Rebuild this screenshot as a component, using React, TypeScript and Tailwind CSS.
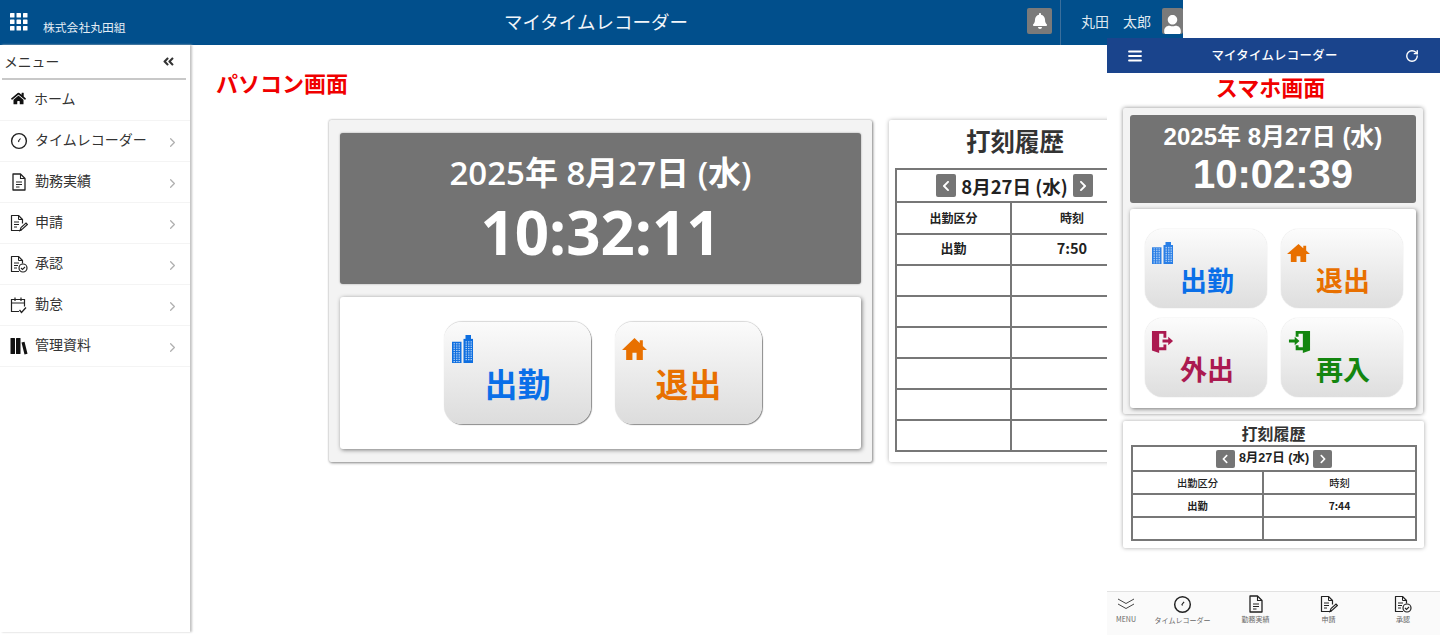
import React from "react";
import { FaBell, FaUser, FaHome, FaChevronLeft, FaChevronRight, FaAngleDoubleLeft } from "react-icons/fa";
import { LuChevronRight, LuRotateCw, LuMenu } from "react-icons/lu";

const jp = "font-['Noto_Sans_CJK_JP','Noto_Sans',sans-serif]";

function Grid() {
  return (
    <svg width="18" height="18" viewBox="0 0 18 18" fill="#fff">
      {[0, 6.5, 13].map((y) => [0, 6.5, 13].map((x) => <rect key={`${x}-${y}`} x={x} y={y} width="4.5" height="4.5" rx="0.6" />))}
    </svg>
  );
}

function IconClock({ s = 18 }: { s?: number }) {
  return (
    <svg width={s} height={s} viewBox="0 0 18 18" fill="none" stroke="#222" strokeWidth="1.4">
      <circle cx="9" cy="9" r="7.4" />
      <path d="M10.5 6.5 L8.5 9 L9 10" strokeWidth="1.1" />
    </svg>
  );
}
function IconDoc({ s = 18 }: { s?: number }) {
  return (
    <svg width={s} height={s} viewBox="0 0 18 18" fill="none" stroke="#222" strokeWidth="1.3">
      <path d="M3 1h7.5l4.5 4.5V17H3z" strokeLinejoin="round" />
      <path d="M10.5 1v4.5H15M6 9h6M6 11.5h6M6 14h3.5" strokeWidth="1.1" />
    </svg>
  );
}
function IconDocPen({ s = 18 }: { s?: number }) {
  return (
    <svg width={s} height={s} viewBox="0 0 18 18" fill="none" stroke="#222" strokeWidth="1.2">
      <path d="M11.5 16.5H1.5v-15h7l4 4v4" strokeLinejoin="round" />
      <path d="M8.5 1.5v4h4M4 8h5M4 10.5h5M4 13h3" strokeWidth="1" />
      <path d="M10 16.5l1-3 5-4.5 1.4 1.5-5 4.5z" strokeWidth="1.1" />
    </svg>
  );
}
function IconDocCheck({ s = 18 }: { s?: number }) {
  return (
    <svg width={s} height={s} viewBox="0 0 18 18" fill="none" stroke="#222" strokeWidth="1.2">
      <path d="M9 16.5H1.5v-15h7l4 4v3" strokeLinejoin="round" />
      <path d="M8.5 1.5v4h4M4 8h5M4 10.5h4M4 13h3" strokeWidth="1" />
      <circle cx="13" cy="13" r="4" />
      <path d="M11 13l1.5 1.5 2.5-2.5" strokeWidth="1.1" />
    </svg>
  );
}
function IconCal() {
  return (
    <svg width="18" height="18" viewBox="0 0 18 18" fill="none" stroke="#222" strokeWidth="1.2">
      <path d="M9 15.5H1.5v-12h13v7M1.5 7h13M5 1.5v3.5M11 1.5v3.5" />
      <path d="M9.5 14l2 2.5 4.5-5" strokeWidth="1.3" />
    </svg>
  );
}
function IconBooks() {
  return (
    <svg width="18" height="18" viewBox="0 0 18 18" fill="#111">
      <rect x="0.5" y="1" width="4.5" height="16" rx="0.5" />
      <rect x="6" y="1" width="4.5" height="16" rx="0.5" />
      <path d="M11.5 5.5l3-.8 3 12-3 .8z" />
    </svg>
  );
}
function IconBuilding({ w, h, c }: { w: number; h: number; c: string }) {
  const cells = [];
  for (let y = 0; y < 9; y++) for (let x = 0; x < 3; x++) {
    cells.push(<rect key={`a${x}${y}`} x={1.5 + x * 2.5} y={8.5 + y * 2.3} width="1.5" height="1.2" fill="#fff" opacity="0.65" />);
    cells.push(<rect key={`b${x}${y}`} x={13.5 + x * 2.5} y={6.5 + y * 2.3} width="1.5" height="1.2" fill="#fff" opacity="0.65" />);
  }
  return (
    <svg width={w} height={h} viewBox="0 0 21 29" preserveAspectRatio="none" className="block">
      <rect x="0" y="7" width="9.5" height="22" fill={c} />
      <rect x="11.5" y="4" width="9.5" height="25" fill={c} />
      <rect x="13.5" y="0" width="5.5" height="5" fill={c} />
      {cells}
    </svg>
  );
}
function IconHouse({ w, h, c }: { w: number; h: number; c: string }) {
  return (
    <svg width={w} height={h} viewBox="0 0 24 20" preserveAspectRatio="none" fill={c} className="block">
      <path d="M12 0 L0 11 H4 V20 H10 V13.5 H14 V20 H20 V11 H24 L20 7.3 V2 H17 V4.6 Z" />
    </svg>
  );
}
function IconDoorOut({ c }: { c: string }) {
  return (
    <svg width="23" height="23" viewBox="0 0 24 24" fill={c} className="block">
      <path d="M1 1h15v7h-3V4H8.5v14H13v-3h3v6H8.5v3L1 21.5z" />
      <path d="M12 10h6V7l5 4.5-5 4.5v-3h-6z" />
    </svg>
  );
}
function IconDoorIn({ c }: { c: string }) {
  return (
    <svg width="23" height="23" viewBox="0 0 24 24" fill={c} className="block">
      <path d="M8 1h15v20.5L15.5 24v-3H8v-5h3v2h4.5V4H11v3H8z" />
      <path d="M1 10h6V7l5 4.5-5 4.5v-3H1z" />
    </svg>
  );
}

const menu = [
  { label: "タイムレコーダー", icon: <IconClock /> },
  { label: "勤務実績", icon: <IconDoc /> },
  { label: "申請", icon: <IconDocPen /> },
  { label: "承認", icon: <IconDocCheck /> },
  { label: "勤怠", icon: <IconCal /> },
  { label: "管理資料", icon: <IconBooks /> },
];

function PunchPc({ label, color, icon, iconClass }: { label: string; color: string; icon: React.ReactNode; iconClass: string }) {
  return (
    <div className="relative flex h-[102px] w-[147px] items-end justify-center rounded-[18px] bg-gradient-to-b from-[#fbfbfb] to-[#dcdcdc] pb-[21px] shadow-[1px_1px_1px_#8a8a8a,0_-1px_1px_#d8d8d8]">
      <span className={iconClass}>{icon}</span>
      <span className="text-[33px] font-bold leading-[40px]" style={{ color }}>{label}</span>
    </div>
  );
}

function PunchSp({ label, color, icon, iconClass }: { label: string; color: string; icon: React.ReactNode; iconClass: string }) {
  return (
    <div className="relative flex h-[79px] w-[122px] items-end justify-center rounded-[18px] bg-gradient-to-b from-[#fcfcfc] to-[#dedede] pb-[12px] pl-[2px] shadow-[0_0_1px_#bbbbbb]">
      <span className={iconClass}>{icon}</span>
      <span className="text-[27px] font-semibold leading-[32px]" style={{ color }}>{label}</span>
    </div>
  );
}

export default function App() {
  return (
    <div className={`relative h-[635px] w-[1440px] overflow-hidden bg-white ${jp}`}>
      <div className="flex h-[635px] w-[1183px] flex-col">
        <header className="flex h-[45px] shrink-0 items-stretch bg-[#014f8c] text-white">
          <div className="flex w-[360px] items-start pl-[10px] pt-[13px]">
            <Grid />
            <span className="ml-[15px] mt-[5px] text-[11.8px] leading-[18px] text-[#e4edf5]">株式会社丸田組</span>
          </div>
          <div className="flex flex-1 items-center justify-center pr-[195px] pb-[2px] text-[18.5px] text-[#f2f6fa]">マイタイムレコーダー</div>
          <div className="flex items-center pr-[8px] pb-[3px]">
            <div className="flex h-[26px] w-[25px] items-center justify-center rounded-[2px] bg-[#7a7a7a]"><FaBell size={16} color="#fff" /></div>
          </div>
          <div className="flex w-[123px] items-center border-l border-[#3b6f9c] pl-[20px] pb-[3px]">
            <span className="w-[81px] whitespace-nowrap text-[14px] text-[#dfe8f0]">丸田　太郎</span>
            <div className="flex h-[26px] w-[21px] items-end justify-center overflow-hidden rounded-[2px] bg-[#7a7a7a]"><FaUser size={19} color="#fff" /></div>
          </div>
        </header>
        <div className="flex min-h-0 flex-1">
          <aside className="h-[587px] w-[190px] shrink-0 text-[#333] shadow-[2px_0_2px_#c4c4c4]">
            <div className="mx-[2px] flex h-[35px] w-[184px] items-center justify-between border-b-2 border-[#c8c8c8] pr-[11px] pl-[2px] text-[13.8px]">
              <span>メニュー</span>
              <FaAngleDoubleLeft size={13} color="#333" />
            </div>
            <div className="flex h-[41px] items-center gap-[8px] border-b border-[#f4f4f4] pl-[11px] pb-[3px] text-[14px]">
              <FaHome size={15} color="#111" />
              <span>ホーム</span>
            </div>
            {menu.map((m) => (
              <div key={m.label} className="flex h-[41px] items-center border-b border-[#f4f4f4] pl-[10px] pr-[10px] text-[14px]">
                <span className="flex w-[25px] items-center">{m.icon}</span>
                <span className="flex-1 pb-[3px]">{m.label}</span>
                <LuChevronRight size={15} color="#b0b0b0" className="mt-[2px]" />
              </div>
            ))}
          </aside>
          <main className="min-w-0 flex-1 overflow-hidden pl-[26px]">
            <div className="pt-[22px] text-[22px] font-bold leading-[30px] text-[#f00000]">パソコン画面</div>
            <div className="ml-[113px] mt-[23px] flex w-[1000px] gap-[17px]">
              <section className="flex h-[342px] w-[543px] shrink-0 flex-col gap-[13px] rounded-[2px] bg-[#f3f3f3] px-[11px] pt-[13px] shadow-[1px_1px_3px_#8c8c8c,0_0_2px_#aaaaaa]">
                <div className="flex h-[151px] flex-col items-center rounded-[3px] bg-[#737373] pt-[15px] font-['Open_Sans','Noto_Sans_CJK_JP',sans-serif] text-white shadow-[0_0_2px_#999]">
                  <div className="text-[33px] font-semibold leading-[50px]">2025年 8月27日 (水)</div>
                  <div className="text-[60px] font-bold leading-[68px]">10:32:11</div>
                </div>
                <div className="flex h-[152px] items-center justify-center gap-[24px] rounded-[3px] bg-white pl-[5px] shadow-[1px_1px_4px_#777]">
                  <PunchPc label="出勤" color="#0a6fe8" icon={<IconBuilding w={21} h={28} c="#0f6fe0" />} iconClass="absolute left-[8px] top-[13px]" />
                  <PunchPc label="退出" color="#e87000" icon={<IconHouse w={25} h={22} c="#e87000" />} iconClass="absolute left-[7px] top-[16px]" />
                </div>
              </section>
              <section className="h-[342px] w-[320px] shrink-0 rounded-[2px] bg-white px-[6px] shadow-[0_0_4px_#b5b5b5]">
                <div className="w-[240px] pt-[1px] text-center text-[24.5px] font-bold leading-[40px] text-[#333]">打刻履歴</div>
                <table className="mt-[7px] w-[237px] table-fixed border-collapse border-2 border-[#777] text-[#222]">
                  <colgroup>
                    <col className="w-[115px]" />
                    <col className="w-[122px]" />
                  </colgroup>
                  <tbody>
                    <tr className="h-[33px]">
                      <td colSpan={2} className="border-2 border-[#777] p-0">
                        <div className="flex items-center justify-center gap-[5px]">
                          <span className="flex h-[23px] w-[20px] items-center justify-center rounded-[2px] bg-[#757575]"><FaChevronLeft size={12} color="#fff" /></span>
                          <span className="whitespace-nowrap text-[18.5px] font-semibold leading-[24px]">8月27日 (水)</span>
                          <span className="flex h-[23px] w-[20px] items-center justify-center rounded-[2px] bg-[#757575]"><FaChevronRight size={12} color="#fff" /></span>
                        </div>
                      </td>
                    </tr>
                    <tr className="h-[32px]">
                      <td className="border-2 border-[#777] p-0 text-center text-[12px] font-bold">出勤区分</td>
                      <td className="border-2 border-[#777] p-0 text-center text-[12px] font-bold">時刻</td>
                    </tr>
                    <tr className="h-[31px]">
                      <td className="border-2 border-[#777] p-0 pb-[3px] text-center text-[13px] font-bold">出勤</td>
                      <td className="border-2 border-[#777] p-0 pb-[3px] text-center text-[14.5px] font-bold">7:50</td>
                    </tr>
                    {[0, 1, 2, 3, 4, 5].map((i) => (
                      <tr key={i} className="h-[31px]">
                        <td className="border-2 border-[#777] p-0">&nbsp;</td>
                        <td className="border-2 border-[#777] p-0">&nbsp;</td>
                      </tr>
                    ))}
                  </tbody>
                </table>
              </section>
            </div>
          </main>
        </div>
      </div>

      <div className="absolute left-[1107px] top-[38px] flex h-[597px] w-[333px] flex-col bg-white">
        <div className="flex h-[35px] shrink-0 items-center justify-between bg-[#1a448c] pl-[19px] pr-[21px] text-white">
          <LuMenu size={18} strokeWidth={2.4} />
          <span className="text-[12.4px] font-medium tracking-[0.3px]">マイタイムレコーダー</span>
          <LuRotateCw size={14} strokeWidth={2.4} />
        </div>
        <div className="pr-[6px] text-center text-[22px] font-bold leading-[26px] text-[#f00000]">スマホ画面</div>
        <section className="mx-[16px] mt-[9px] flex h-[306px] w-[300px] flex-col gap-[6px] rounded-[2px] bg-[#f3f3f3] px-[7px] pt-[7px] shadow-[0_0_4px_#8c8c8c]">
          <div className="flex h-[88px] flex-col items-center rounded-[3px] bg-[#737373] pt-[7px] font-['Liberation_Sans','Noto_Sans_CJK_JP',sans-serif] font-bold text-white">
            <div className="text-[24px] leading-[30px]">2025年 8月27日 (水)</div>
            <div className="text-[40px] leading-[44px]">10:02:39</div>
          </div>
          <div className="grid h-[199px] grid-cols-[122px_122px] content-start justify-center gap-x-[14px] gap-y-[10px] rounded-[3px] bg-white pl-[2px] pt-[20px] shadow-[1px_1px_4px_#777]">
            <PunchSp label="出勤" color="#0a6fe8" icon={<IconBuilding w={21} h={22} c="#2a7fe6" />} iconClass="absolute left-[7px] top-[13px]" />
            <PunchSp label="退出" color="#e87000" icon={<IconHouse w={23} h={18} c="#e87000" />} iconClass="absolute left-[6px] top-[15px]" />
            <PunchSp label="外出" color="#ab1a50" icon={<IconDoorOut c="#ab1a50" />} iconClass="absolute left-[6px] top-[12px]" />
            <PunchSp label="再入" color="#13860f" icon={<IconDoorIn c="#13860f" />} iconClass="absolute left-[7px] top-[12px]" />
          </div>
        </section>
        <section className="mx-[16px] mt-[7px] h-[127px] w-[301px] rounded-[2px] bg-white px-[8px] shadow-[0_0_4px_#a8a8a8]">
          <div className="text-center text-[16px] font-bold leading-[24px] text-[#333]">打刻履歴</div>
          <table className="w-[284px] table-fixed border-collapse border-2 border-[#777] text-[#222]">
            <colgroup>
              <col className="w-[131px]" />
              <col className="w-[153px]" />
            </colgroup>
            <tbody>
              <tr className="h-[25px]">
                <td colSpan={2} className="border-2 border-[#777] p-0">
                  <div className="flex items-center justify-center gap-[4px]">
                    <span className="flex h-[18px] w-[19px] items-center justify-center rounded-[2px] bg-[#757575]"><FaChevronLeft size={10} color="#fff" /></span>
                    <span className="whitespace-nowrap font-['Liberation_Sans','Noto_Sans_CJK_JP',sans-serif] text-[12.5px] font-bold">8月27日 (水)</span>
                    <span className="flex h-[18px] w-[19px] items-center justify-center rounded-[2px] bg-[#757575]"><FaChevronRight size={10} color="#fff" /></span>
                  </div>
                </td>
              </tr>
              <tr className="h-[23px] text-[10.3px]">
                <td className="border-2 border-[#777] p-0 text-center font-medium">出勤区分</td>
                <td className="border-2 border-[#777] p-0 text-center font-medium">時刻</td>
              </tr>
              <tr className="h-[23px] text-[10.3px]">
                <td className="border-2 border-[#777] p-0 text-center font-bold">出勤</td>
                <td className="border-2 border-[#777] p-0 text-center font-bold">7:44</td>
              </tr>
              <tr className="h-[23px]">
                <td className="border-2 border-[#777] p-0" />
                <td className="border-2 border-[#777] p-0" />
              </tr>
            </tbody>
          </table>
        </section>
        <nav className="mt-auto flex h-[44px] border-t border-[#e2e2e2] bg-[#fafafa] text-[#666]">
          {[
            { label: "MENU", w: "w-[38px]", icon: (
              <svg width="18" height="18" viewBox="0 0 18 18" fill="none" stroke="#444" strokeWidth="1"><path d="M1 4l8 4.5L17 4M1 9l8 4.5L17 9" /></svg>
            ) },
            { label: "タイムレコーダー", w: "w-[75px]", icon: <IconClock s={19} /> },
            { label: "勤務実績", w: "w-[71px]", icon: <IconDoc s={18} /> },
            { label: "申請", w: "w-[75px]", icon: <IconDocPen s={18} /> },
            { label: "承認", w: "w-[74px]", icon: <IconDocCheck s={18} /> },
          ].map((n) => (
            <div key={n.label} className={`${n.w} flex flex-col items-center pt-[3px]`}>
              {n.icon}
              <span className="mt-[1px] whitespace-nowrap text-[7px] leading-[10px]">{n.label}</span>
            </div>
          ))}
        </nav>
      </div>
    </div>
  );
}
